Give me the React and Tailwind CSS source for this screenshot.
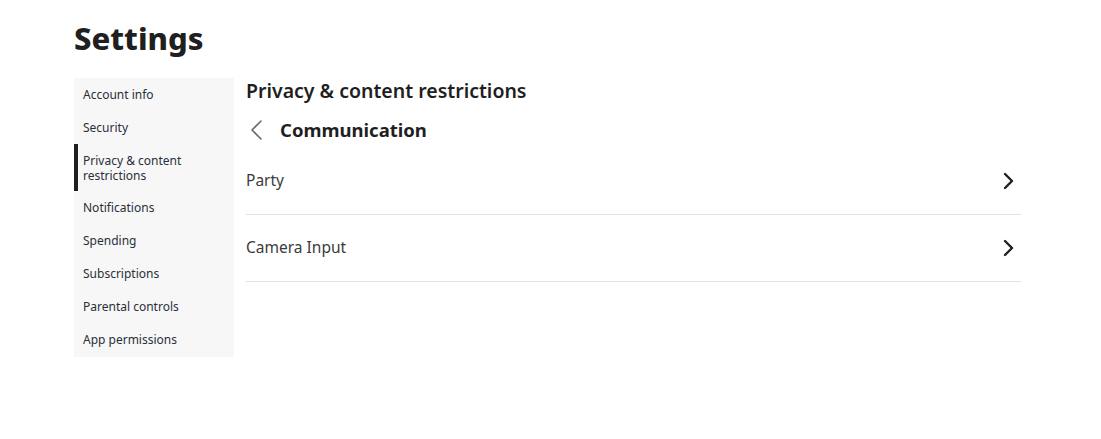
import React from 'react';

const navItems = [
  'Account info',
  'Security',
  'Privacy & content restrictions',
  'Notifications',
  'Spending',
  'Subscriptions',
  'Parental controls',
  'App permissions',
];

const rows = ['Party', 'Camera Input'];

const ChevronRight = () => (
  <svg width="12" height="18" viewBox="0 0 12 18" fill="none">
    <path d="M3 2l7 7-7 7" stroke="#1f1f1f" strokeWidth="2.4" strokeLinecap="round" strokeLinejoin="round" />
  </svg>
);

const ChevronLeft = () => (
  <svg width="14" height="20" viewBox="0 0 14 20" fill="none">
    <path d="M12 1L3 10l9 9" stroke="#6b6b6b" strokeWidth="1.6" strokeLinecap="round" strokeLinejoin="round" />
  </svg>
);

export default function App() {
  return (
    <div className="min-h-screen bg-white font-['Noto_Sans',sans-serif] text-[#1f1f1f]">
      <div className="pl-[74px] pr-[80px] pt-[16px]">
        <h1 className="text-[31px] font-extrabold leading-[44px]">Settings</h1>

        <div className="mt-[18px] flex items-start">
          <nav className="w-[160px] shrink-0 bg-[#f7f7f7] pb-[1px]">
            {navItems.map((item) => {
              const active = item.startsWith('Privacy');
              return (
                <div
                  key={item}
                  className={
                    active
                      ? 'flex h-[47px] items-center border-l-4 border-[#1f1f1f] pl-[5px] pr-2 text-[12px] leading-[15px] text-[#2a2f3a]'
                      : 'flex h-[33px] items-center pl-[9px] pr-2 text-[12px] leading-[15px] text-[#2a2f3a]'
                  }
                >
                  {item}
                </div>
              );
            })}
          </nav>

          <main className="ml-[12px] w-[775px]">
            <h2 className="text-[19.5px] font-semibold leading-[26px]">Privacy &amp; content restrictions</h2>
            <div className="mt-[13px] flex items-center">
              <button className="ml-[3px] flex h-[20px] w-[14px] items-center">
                <ChevronLeft />
              </button>
              <h3 className="ml-[17px] text-[18.5px] font-bold leading-[26px]">Communication</h3>
            </div>
            <div className="mt-[5px]">
              {rows.map((row) => (
                <div
                  key={row}
                  className="flex h-[67px] items-center justify-between border-b border-[#e3e3e3] pr-[7px]"
                >
                  <span className="text-[15.5px] text-[#3b3b3b]">{row}</span>
                  <ChevronRight />
                </div>
              ))}
            </div>
          </main>
        </div>
      </div>
    </div>
  );
}
